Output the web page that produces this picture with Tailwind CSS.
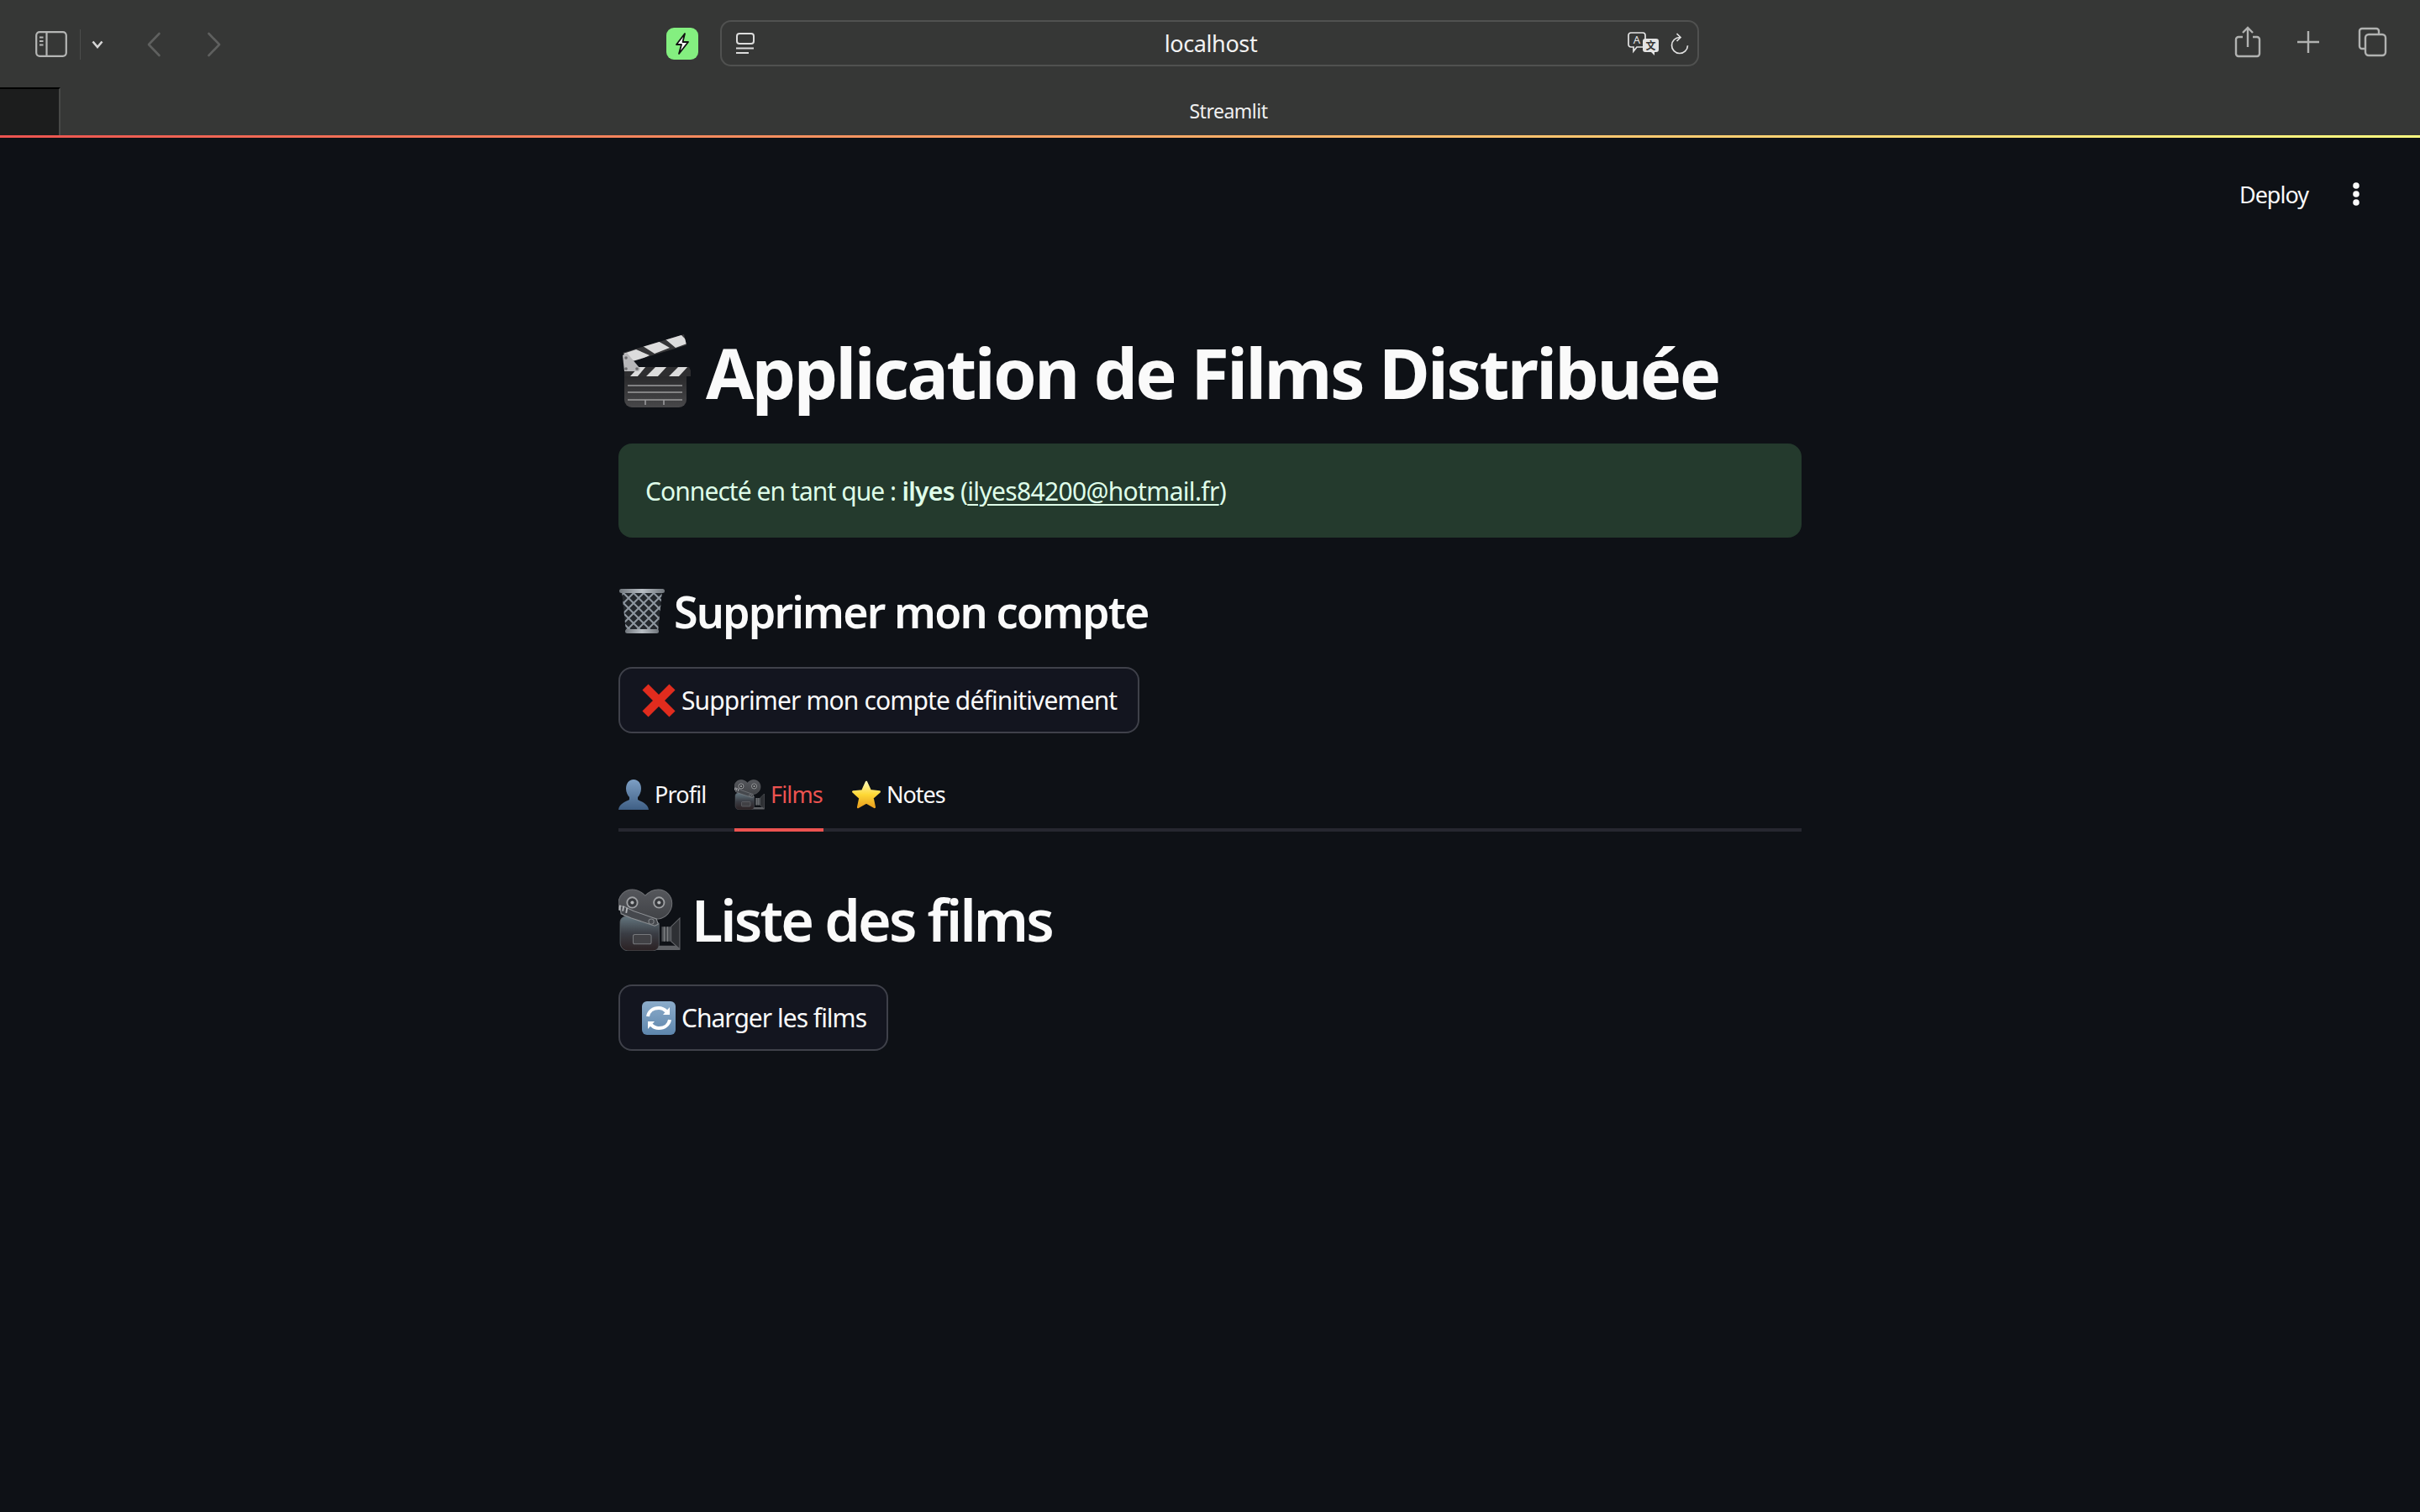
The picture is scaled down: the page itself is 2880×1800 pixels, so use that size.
<!DOCTYPE html>
<html lang="en">
<head>
    <meta charset="UTF-8">
    <title>Streamlit</title>
    <script src="https://cdn.jsdelivr.net/npm/@tailwindcss/browser@4"></script>
</head>
<body class="bg-[#0e1116] min-h-screen font-['Noto_Sans',sans-serif] text-white overflow-hidden">
    <!-- shared emoji drawings -->
    <svg class="absolute" width="0" height="0">
        <defs>
            <linearGradient id="camBody" x1="0" y1="0" x2="0" y2="1"><stop offset="0" stop-color="#64767f"/><stop offset="0.5" stop-color="#3a3d44"/><stop offset="1" stop-color="#2b2123"/></linearGradient>
            <linearGradient id="camReel" x1="0" y1="0" x2="0" y2="1"><stop offset="0" stop-color="#55575c"/><stop offset="1" stop-color="#414347"/></linearGradient>
            <symbol id="camera" viewBox="0 0 72 72">
                <path d="M16 1c6 0 11 3 15 7 4-4 9-7 15-7 9 0 16 7 16 16s-7 17-16 18H16C7 34 0 26 0 17S7 1 16 1z" fill="url(#camReel)" stroke="#6d6f73" stroke-width="1"/>
                <circle cx="16" cy="16" r="6" fill="#36383c" stroke="#9fa1a4" stroke-width="1.800"/><circle cx="16" cy="16" r="2" fill="#b4b6b8"/>
                <circle cx="47" cy="16" r="6" fill="#36383c" stroke="#9fa1a4" stroke-width="1.800"/><circle cx="47" cy="16" r="2" fill="#b4b6b8"/>
                <path d="M37 66h34v5H37z" fill="#5f6165"/>
                <path d="M50 44h12v17H50z" fill="#4d5054"/><path d="M53 44v17M57 44v17" stroke="#85878a" stroke-width="1"/>
                <path d="M61 44l10-10v36l-10-9z" fill="#2e3034" stroke="#65676b" stroke-width="1"/>
                <path d="M9 32h24l14 8v24c0 5-3 8-8 8H12c-6 0-10-4-10-10V39c0-4 3-7 7-7z" fill="url(#camBody)" stroke="#5c6167" stroke-width="0.800"/>
                <path d="M2 20l5 1 11 5 26 9 2 6-4 2-27-9-12-5z" fill="#45484d" stroke="#8e9195" stroke-width="1"/>
                <circle cx="38" cy="38" r="3" fill="none" stroke="#85888c" stroke-width="1"/>
                <path d="M2 19l-1 6M6 20l-1 6M10 22l-1 6" stroke="#b5b7ba" stroke-width="1.800"/>
                <rect x="17" y="53" width="21" height="11" rx="2" fill="#414145" stroke="#77797d" stroke-width="1"/>
            </symbol>
        </defs>
    </svg>

    <!-- safari toolbar -->
    <div class="h-[104px] bg-[#363736] flex items-start relative">
        <div class="flex items-center h-[37px] mt-[34px] ml-[42px]">
            <svg width="38" height="31" viewBox="0 0 38 31" fill="none" stroke="#b5b6b5" stroke-width="2.200"><rect x="1.200" y="1.200" width="35.600" height="28.600" rx="4"/><path d="M13.500 1.200v28.600"/><path d="M5 7.500h4.500M5 12h4.500M5 16.500h4.500" stroke-width="1.800"/></svg>
            <div class="w-px h-[36px] bg-[#4c4d4c] ml-[15px]"></div>
            <svg class="ml-[13px]" width="14" height="10" viewBox="0 0 14 10" fill="none" stroke="#d6d6d6" stroke-width="2.600"><path d="M1.500 1.500L7 8l5.500-6.500"/></svg>
            <svg class="ml-[51px]" width="18" height="30" viewBox="0 0 18 30" fill="none" stroke="#5f605f" stroke-width="2.600" stroke-linecap="round" stroke-linejoin="round"><path d="M15.500 2L3 15l12.500 13"/></svg>
            <svg class="ml-[54px]" width="18" height="30" viewBox="0 0 18 30" fill="none" stroke="#5f605f" stroke-width="2.600" stroke-linecap="round" stroke-linejoin="round"><path d="M2.500 2L15 15 2.500 28"/></svg>
        </div>
        <!-- favicon -->
        <div class="absolute left-[793px] top-[33px] w-[38px] h-[38px] rounded-[9px] bg-[#84ef80] flex items-center justify-center">
            <svg width="18" height="26" viewBox="0 0 18 26"><path d="M12 1L2 14h6l-3 11 11-14h-6.500z" fill="#fff" stroke="#111" stroke-width="1.800" stroke-linejoin="round"/></svg>
        </div>
        <!-- url bar -->
        <div class="absolute left-[857px] top-[24px] w-[1165px] h-[55px] rounded-[13px] border-2 border-[#505150] flex items-center pl-[17px] pr-[10px]">
            <svg width="22" height="26" viewBox="0 0 22 26" fill="none" stroke="#dcdcdc" stroke-width="2"><rect x="1" y="1" width="20" height="12" rx="3"/><path d="M0 18.500h21M0 24h15"/></svg>
            <span class="flex-1 text-center text-[27px] text-[#f2f2f2] leading-none pl-[47px] tracking-[-0.4px]">localhost</span>
            <svg width="38" height="28" viewBox="0 0 38 28" class="mr-[13px]">
                <path d="M4 1h14a3 3 0 0 1 3 3v11a3 3 0 0 1-3 3h-7l-4 5v-5H4a3 3 0 0 1-3-3V4a3 3 0 0 1 3-3z" fill="#363736" stroke="#e4e4e4" stroke-width="1.700"/>
                <text x="11" y="14" text-anchor="middle" font-size="13" fill="#e4e4e4" font-family="Noto Sans">A</text>
                <path d="M21 8h13a3 3 0 0 1 3 3v10a3 3 0 0 1-3 3h-2v4l-4-4h-7a3 3 0 0 1-3-3V11a3 3 0 0 1 3-3z" fill="#e4e4e4"/>
                <text x="27.500" y="21" text-anchor="middle" font-size="12" font-weight="700" fill="#363736" font-family="Noto Sans CJK SC">文</text>
            </svg>
            <svg width="22" height="26" viewBox="0 0 22 26" fill="none" stroke="#e0e0e0" stroke-width="1.700"><path d="M11 5.500a9.500 9.500 0 1 0 9.500 9.800"/><path d="M7.500 1l4.500 4.500-4.500 4.500"/></svg>
        </div>
        <!-- right toolbar actions -->
        <div class="absolute right-[39px] top-[31px] flex items-center">
            <svg width="32" height="38" viewBox="0 0 32 38" fill="none" stroke="#b1b2b1" stroke-width="2.400"><path d="M10 13H5a3 3 0 0 0-3 3v17a3 3 0 0 0 3 3h22a3 3 0 0 0 3-3V16a3 3 0 0 0-3-3h-5"/><path d="M16 25V2M10 8l6-6 6 6"/></svg>
            <svg class="ml-[42px]" width="28" height="28" viewBox="0 0 28 28" fill="none" stroke="#b1b2b1" stroke-width="2.400"><path d="M14 1v26M1 14h26"/></svg>
            <svg class="ml-[45px]" width="35" height="36" viewBox="0 0 35 36" fill="none" stroke="#b1b2b1" stroke-width="2.400"><path d="M8 26H5a3 3 0 0 1-3-3V5a3 3 0 0 1 3-3h17a3 3 0 0 1 3 3v4"/><rect x="9" y="9" width="24" height="25" rx="4"/></svg>
        </div>
    </div>

    <!-- tab strip -->
    <div class="h-[57px] bg-[#363736] flex relative">
        <div class="w-[72px] h-full bg-[#1c1d1d] border-t-2 border-t-black border-r-2 border-r-[#474847]"></div>
        <div class="flex-1 flex items-center justify-center text-[23px] text-[#f0f0f0] leading-none -ml-[28px] tracking-[-0.5px]">Streamlit</div>
    </div>

    <!-- streamlit decoration -->
    <div class="h-[3px] bg-gradient-to-r from-[#ec5350] to-[#fffd80]"></div>

    <!-- streamlit header -->
    <div class="h-[108px] flex items-center justify-end pr-[71px] pt-[26px]">
        <span class="text-[27px] leading-none tracking-[-1px] text-[#fafafa]">Deploy</span>
        <svg class="ml-[52px]" width="10" height="28" viewBox="0 0 10 28" fill="#fafafa"><circle cx="5" cy="4" r="3.800"/><circle cx="5" cy="14" r="3.800"/><circle cx="5" cy="24" r="3.800"/></svg>
    </div>

    <main class="w-[1408px] ml-[736px]">
        <!-- title -->
        <h1 class="flex items-center h-[92px] mt-[124px] text-[83px] font-bold leading-none text-[#fafafa] tracking-[-2.6px]">
            <svg width="88" height="88" viewBox="0 0 88 88" class="shrink-0">
                <defs>
                    <linearGradient id="clapBody" x1="0" y1="0" x2="0" y2="1"><stop offset="0" stop-color="#2a2a2c"/><stop offset="1" stop-color="#48484a"/></linearGradient>
                    <clipPath id="clapTop"><path d="M5 22L78 0l3 13L17 32z"/></clipPath>
                    <clipPath id="clapMid"><path d="M7 39h77l2 4v7H7z"/></clipPath>
                </defs>
                <path d="M5 22L78 0l3 13L17 32z" fill="#353537"/>
                <g clip-path="url(#clapTop)" fill="#dcdcdc"><path d="M3 24l18-6 16 7-16 8zM29 14l18-6 14 8-18 7zM56 6l18-6 10 10-16 6z"/></g>
                <path d="M7 39h77l2 4v7H7z" fill="#2e2e30"/>
                <g clip-path="url(#clapMid)" fill="#dcdcdc"><path d="M14 50l11-12h8L22 51zM33 50l12-12h13L46 51zM60 50l12-12h11L71 51z"/></g>
                <path d="M7 50h74v28a9 9 0 0 1-9 9H16a9 9 0 0 1-9-9z" fill="url(#clapBody)"/>
                <path d="M11 61h65M11 69h65M11 78h65M32 78v6M54 78v6" stroke="#9a9a9c" stroke-width="1.600"/>
                <path d="M5 25l5-3 16 19-2 3H7z" fill="#b7b7b9"/>
                <circle cx="9" cy="28" r="1.800" fill="#6a6a6c"/><circle cx="9" cy="41" r="1.800" fill="#6a6a6c"/><circle cx="22" cy="41" r="1.800" fill="#6a6a6c"/>
            </svg>
            <span class="ml-[16px]">Application de Films Distribuée</span>
        </h1>

        <!-- success alert -->
        <div class="mt-[40px] h-[112px] rounded-[16px] bg-[#243a2d] flex items-center pl-[32px] text-[30px] text-[#dffde9] tracking-[-0.67px]">
            <p><span class="tracking-[-0.94px]">Connecté en tant que :</span> <strong class="font-semibold">ilyes</strong> (<a href="#" class="underline underline-offset-[4px] decoration-[2px]">ilyes84200@hotmail.fr</a>)</p>
        </div>

        <!-- delete account -->
        <h2 class="flex items-center h-[60px] mt-[58px] text-[52px] font-semibold leading-none text-[#fafafa] tracking-[-1.85px]">
            <svg width="56" height="56" viewBox="0 0 56 56" class="shrink-0">
                <defs>
                    <pattern id="mesh" width="12" height="12" patternUnits="userSpaceOnUse"><path d="M0 0l12 12M12 0L0 12" stroke="#8f98a1" stroke-width="2"/></pattern>
                    <clipPath id="binClip"><path d="M4 4h48l-5 48H9z"/></clipPath>
                    <linearGradient id="rim" x1="0" y1="0" x2="1" y2="0"><stop offset="0" stop-color="#70767c"/><stop offset="0.5" stop-color="#b8bec4"/><stop offset="1" stop-color="#70767c"/></linearGradient>
                </defs>
                <path d="M4 4h48l-5 48H9z" fill="#24282d"/>
                <rect x="0" y="0" width="56" height="56" fill="url(#mesh)" clip-path="url(#binClip)"/>
                <rect x="1" y="1" width="54" height="5" rx="2.500" fill="url(#rim)"/>
                <rect x="8" y="49" width="40" height="5" rx="2.500" fill="url(#rim)"/>
            </svg>
            <span class="ml-[10px]">Supprimer mon compte</span>
        </h2>

        <button class="mt-[36px] h-[79px] w-[620px] rounded-[16px] border-2 border-[#3f414a] bg-[#13151f] flex items-center pl-[26px] text-[30px] text-[#fafafa] tracking-[-0.88px]">
            <svg width="40" height="40" viewBox="0 0 40 40" class="shrink-0"><path d="M4 4l32 32M36 4L4 36" stroke="#e12c1e" stroke-width="10"/></svg>
            <span class="ml-[7px]">Supprimer mon compte définitivement</span>
        </button>

        <!-- tabs -->
        <div class="mt-[46px] h-[71px] border-b-4 border-[#262730] flex text-[27px] tracking-[-0.85px] leading-none">
            <div class="flex items-start pt-[9px] h-[71px] w-[138px]">
                <svg width="36" height="36" viewBox="0 0 36 36" class="shrink-0">
                    <defs><linearGradient id="person" x1="0" y1="0" x2="0" y2="1"><stop offset="0" stop-color="#7d9fc4"/><stop offset="1" stop-color="#3f5f85"/></linearGradient></defs>
                    <path d="M18 0c6 0 9 5 9 11 0 4-2 8-4 10v3c3 2 12 4 13 12H0c1-8 10-10 13-12v-3c-2-2-4-6-4-10C9 5 12 0 18 0z" fill="url(#person)"/>
                </svg>
                <span class="ml-[7px] mt-[4px] text-[#fafafa]">Profil</span>
            </div>
            <div class="flex items-start pt-[9px] h-[71px] w-[106px] border-b-4 border-[#ec5350] box-border">
                <svg width="36" height="36" class="shrink-0"><use href="#camera"/></svg>
                <span class="ml-[7px] mt-[4px] text-[#ec5350]">Films</span>
            </div>
            <div class="flex items-start pt-[9px] h-[71px] ml-[33px]">
                <svg width="36" height="36" viewBox="0 0 36 36" class="shrink-0">
                    <defs><linearGradient id="star" x1="0" y1="0" x2="0" y2="1"><stop offset="0" stop-color="#fff7b0"/><stop offset="0.5" stop-color="#fdd835"/><stop offset="1" stop-color="#e9a01f"/></linearGradient></defs>
                    <path d="M18 3l4.700 10.300 11 1.200-8.200 7.400 2.300 11L18 27.300 8.200 33l2.300-11-8.200-7.400 11-1.200z" fill="url(#star)" stroke="url(#star)" stroke-width="2.500" stroke-linejoin="round"/>
                </svg>
                <span class="ml-[6px] mt-[4px] text-[#fafafa] tracking-[-1px]">Notes</span>
            </div>
        </div>

        <!-- films list -->
        <h2 class="flex items-center h-[74px] mt-[68px] text-[68px] font-semibold leading-none text-[#fafafa] tracking-[-2.8px]">
            <svg width="74" height="74" class="shrink-0"><use href="#camera"/></svg>
            <span class="ml-[13px]">Liste des films</span>
        </h2>

        <button class="mt-[40px] h-[79px] w-[321px] rounded-[16px] border-2 border-[#3f414a] bg-[#13151f] flex items-center pl-[26px] text-[30px] text-[#fafafa] tracking-[-1px]">
            <svg width="40" height="40" viewBox="0 0 40 40" class="shrink-0">
                <defs><linearGradient id="refresh" x1="0" y1="0" x2="0" y2="1"><stop offset="0" stop-color="#8cacca"/><stop offset="1" stop-color="#5e86ad"/></linearGradient></defs>
                <rect width="40" height="40" rx="6" fill="url(#refresh)"/>
                <path d="M7 18c1-6 6-10 13-10 4 0 7 2 9 4" fill="none" stroke="#fff" stroke-width="4"/><path d="M25 16l8 0 0-9z" fill="#fff"/>
                <path d="M33 22c-1 6-6 10-13 10-4 0-7-2-9-4" fill="none" stroke="#fff" stroke-width="4"/><path d="M15 24l-8 0 0 9z" fill="#fff"/>
            </svg>
            <span class="ml-[7px]">Charger les films</span>
        </button>
    </main>
</body>
</html>
